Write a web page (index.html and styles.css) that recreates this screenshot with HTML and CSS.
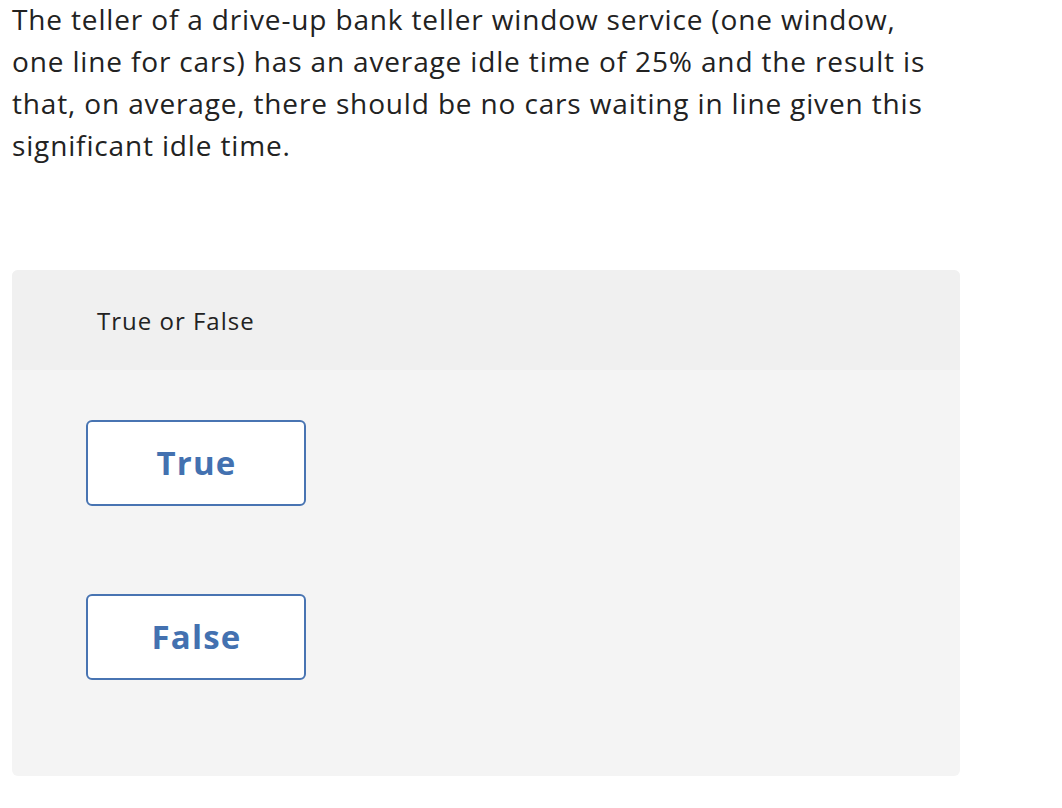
FILE: index.html
```html
<!DOCTYPE html>
<html>
<head>
<meta charset="utf-8">
<link rel="stylesheet" href="styles.css">
</head>
<body>
<p class="question">The teller of a drive-up bank teller window service (one window, one line for cars) has an average idle time of 25% and the result is that, on average, there should be no cars waiting in line given this significant idle time.</p>
<div class="card">
  <div class="card-header">True or False</div>
  <div class="card-body">
    <button class="choice">True</button>
    <button class="choice">False</button>
  </div>
</div>
</body>
</html>
```
FILE: styles.css
```css
html, body {
  margin: 0;
  padding: 0;
  background: #ffffff;
}
body {
  font-family: "Open Sans", "Liberation Sans", sans-serif;
  color: #222222;
}
.question {
  margin: -2px 0 0;
  padding: 0 12px;
  width: 935px;
  font-size: 28px;
  line-height: 42px;
  letter-spacing: 0.85px;
}
.card {
  margin: 104px 0 0 12px;
  width: 948px;
  border-radius: 6px;
  overflow: hidden;
  background: #f4f4f4;
}
.card-header {
  box-sizing: border-box;
  height: 100px;
  background: #f0f0f0;
  display: flex;
  align-items: center;
  padding: 0 0 0 85px;
  font-size: 24px;
  letter-spacing: 1px;
  color: #222222;
}
.card-body {
  display: flex;
  flex-direction: column;
  align-items: flex-start;
  gap: 88px;
  padding: 50px 0 96px 74px;
}
.choice {
  box-sizing: border-box;
  width: 220px;
  height: 86px;
  background: #ffffff;
  border: 2px solid #4874b2;
  border-radius: 6px;
  font-family: inherit;
  font-size: 33px;
  font-weight: 700;
  letter-spacing: 1.2px;
  color: #4371b0;
  padding: 0 0 2px 1px;
}
```
